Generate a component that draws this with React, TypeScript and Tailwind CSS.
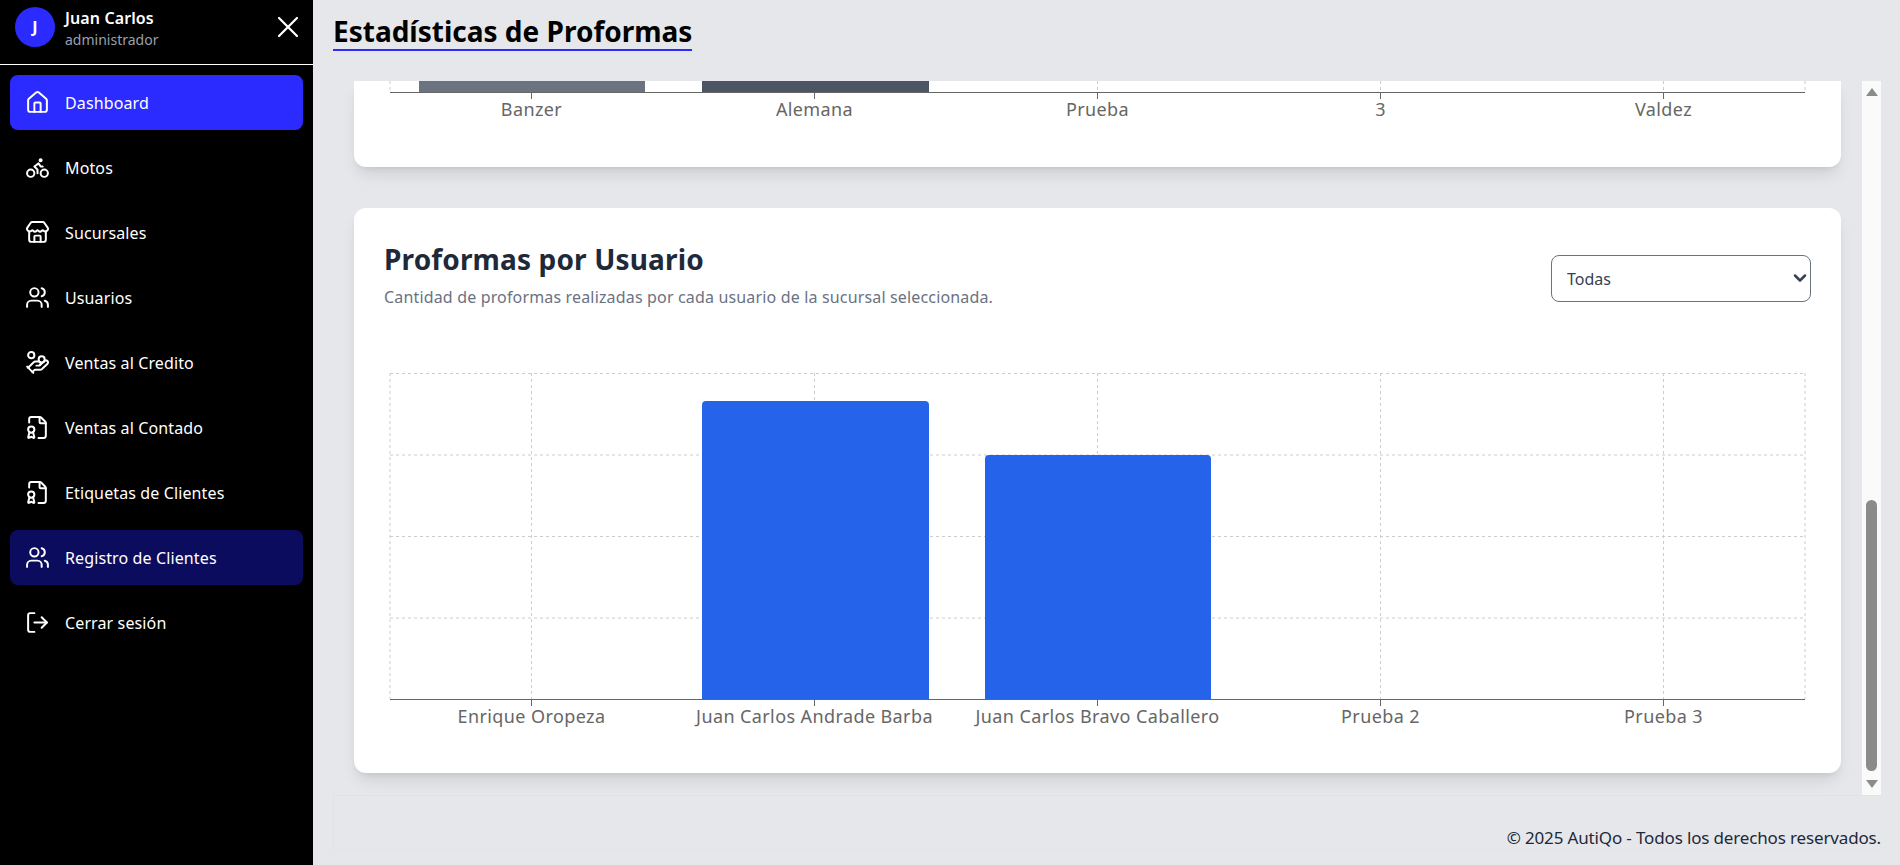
import type { ReactNode } from "react";
import { Bike, ChevronDown, FileBadge, HandCoins, House, LogOut, Store, Users, X } from "lucide-react";

const font = "font-['Noto_Sans',sans-serif]";

const menu = [
  { label: "Dashboard", icon: House, cls: "bg-[#2b2bff]" },
  { label: "Motos", icon: Bike, cls: "" },
  { label: "Sucursales", icon: Store, cls: "" },
  { label: "Usuarios", icon: Users, cls: "" },
  { label: "Ventas al Credito", icon: HandCoins, cls: "" },
  { label: "Ventas al Contado", icon: FileBadge, cls: "" },
  { label: "Etiquetas de Clientes", icon: FileBadge, cls: "" },
  { label: "Registro de Clientes", icon: Users, cls: "bg-[#0c0c5e]" },
  { label: "Cerrar sesión", icon: LogOut, cls: "" },
];

const Sidebar = () => (
  <aside className="w-[313px] shrink-0 h-full bg-black text-white">
    <div className="h-[65px] border-b border-white flex items-start pl-[15px] pr-[7px] pt-[7px]">
      <div className="w-10 h-10 rounded-full bg-[#2b2bff] flex items-center justify-center font-bold text-base">
        J
      </div>
      <div className="ml-[10px] flex-1">
        <p className="text-base font-semibold leading-[22px] tracking-[0.1px]">Juan Carlos</p>
        <p className="text-sm leading-[22px] text-gray-400">administrador</p>
      </div>
      <X size={36} strokeWidth={1.5} className="mt-[2px]" />
    </div>
    <nav className="px-[10px] pt-[10px] flex flex-col gap-[10px]">
      {menu.map((item) => (
        <div key={item.label} className={`h-[55px] rounded-lg flex items-center pl-[15px] gap-[15px] ${item.cls}`}>
          <item.icon size={25} strokeWidth={1.9} className="shrink-0" />
          <span className="text-base tracking-[0.12px] pt-[1px]">{item.label}</span>
        </div>
      ))}
    </nav>
  </aside>
);

// same geometry for both charts, bars go between the grid and the axis
const Chart = ({
  labels,
  axisY,
  rows,
  children,
}: {
  labels: string[];
  axisY: number;
  rows: number[];
  children: ReactNode;
}) => {
  const left = 6;
  const right = 1421;
  const step = (right - left) / labels.length;
  return (
    <svg width={1427} height={axisY + 40} className="block">
      {rows.map((y) => (
        <line key={y} x1={left} x2={right} y1={y + 0.5} y2={y + 0.5} stroke="#ccc" strokeDasharray="3 3" />
      ))}
      {labels.map((_, i) => (
        <line
          key={i}
          x1={left + step * (i + 0.5)}
          x2={left + step * (i + 0.5)}
          y1={0}
          y2={axisY}
          stroke="#ccc"
          strokeDasharray="3 3"
        />
      ))}
      <line x1={left} x2={left} y1={0} y2={axisY} stroke="#ccc" strokeDasharray="3 3" />
      <line x1={right} x2={right} y1={0} y2={axisY} stroke="#ccc" strokeDasharray="3 3" />
      {children}
      <line x1={left} x2={right} y1={axisY + 0.5} y2={axisY + 0.5} stroke="#666" />
      {labels.map((label, i) => (
        <g key={label}>
          <line x1={left + step * (i + 0.5)} x2={left + step * (i + 0.5)} y1={axisY} y2={axisY + 7} stroke="#666" />
          <text
            x={left + step * (i + 0.5)}
            y={axisY + 24}
            textAnchor="middle"
            fill="#666"
            fontSize={18}
            letterSpacing={0.4}
          >
            {label}
          </text>
        </g>
      ))}
    </svg>
  );
};

const App = () => {
  return (
    <div className={`w-[1900px] h-[865px] flex overflow-hidden bg-[#e5e7eb] ${font}`}>
      <Sidebar />
      <main className="flex-1 h-full pl-5 flex flex-col">
        <div className="h-[81px] pt-[14px]">
          <h1 className="inline-block text-[28px] leading-[35px] font-bold text-black border-b-2 border-[#2b2bff]">
            Estadísticas de Proformas
          </h1>
        </div>
        <div className="w-[1548px] h-[714px] flex overflow-hidden">
          <div className="w-[1529px] pl-[21px] pr-[8px]">
            <section className="h-[86px] w-[1487px] bg-white rounded-b-xl shadow-lg pl-[30px] overflow-visible">
              <Chart labels={["Banzer", "Alemana", "Prueba", "3", "Valdez"]} axisY={11} rows={[]}>
                <rect x={35} y={0} width={226} height={11} fill="#6b7280" />
                <rect x={318} y={0} width={227} height={11} fill="#4b5563" />
              </Chart>
            </section>
            <section className="h-[565px] w-[1487px] mt-[41px] bg-white rounded-xl shadow-lg px-[30px] pt-[30px]">
              <div className="flex justify-between items-start">
                <div>
                  <h2 className="text-[28px] leading-[42px] font-bold text-gray-800 tracking-[0.15px]">
                    Proformas por Usuario
                  </h2>
                  <p className="text-base leading-[16px] mt-[9px] text-gray-500 tracking-[0.16px]">
                    Cantidad de proformas realizadas por cada usuario de la sucursal seleccionada.
                  </p>
                </div>
                <div className="relative mt-[17px]">
                  <select className="block appearance-none w-[260px] h-[47px] pl-[15px] pt-[1px] border border-gray-500 rounded-lg bg-white text-base text-gray-700">
                    <option>Todas</option>
                  </select>
                  <ChevronDown
                    size={20}
                    strokeWidth={3}
                    className="absolute right-[1px] top-[13px] text-gray-700 pointer-events-none"
                  />
                </div>
              </div>
              <div className="mt-[68px]">
                <Chart
                  labels={[
                    "Enrique Oropeza",
                    "Juan Carlos Andrade Barba",
                    "Juan Carlos Bravo Caballero",
                    "Prueba 2",
                    "Prueba 3",
                  ]}
                  axisY={326}
                  rows={[0, 81.5, 163, 244.5]}
                >
                  <path d="M318 326V32a4 4 0 0 1 4-4h219a4 4 0 0 1 4 4v294z" fill="#2563eb" />
                  <path d="M601 326V86a4 4 0 0 1 4-4h218a4 4 0 0 1 4 4v240z" fill="#2563eb" />
                </Chart>
              </div>
            </section>
          </div>
          {/* scrollbar */}
          <div className="w-[19px] bg-[#fafafa] flex flex-col items-center h-[714px]">
            <div className="mt-[7px] w-0 h-0 border-x-[6px] border-x-transparent border-b-[8px] border-b-[#8b8b8b]" />
            <div className="mt-[404px] w-[11px] h-[271px] rounded-full bg-[#8b8b8b]" />
            <div className="mt-[9px] w-0 h-0 border-x-[6px] border-x-transparent border-t-[8px] border-t-[#8b8b8b]" />
          </div>
        </div>
        <footer className="w-[1548px] h-[55px] flex items-end justify-end leading-[23px] text-[17px] text-gray-800 tracking-[-0.15px] border border-[#e0e2e6] border-r-0 border-b-[#e2e4e8]">
          © 2025 AutiQo - Todos los derechos reservados.
        </footer>
      </main>
    </div>
  );
};

export default App;
